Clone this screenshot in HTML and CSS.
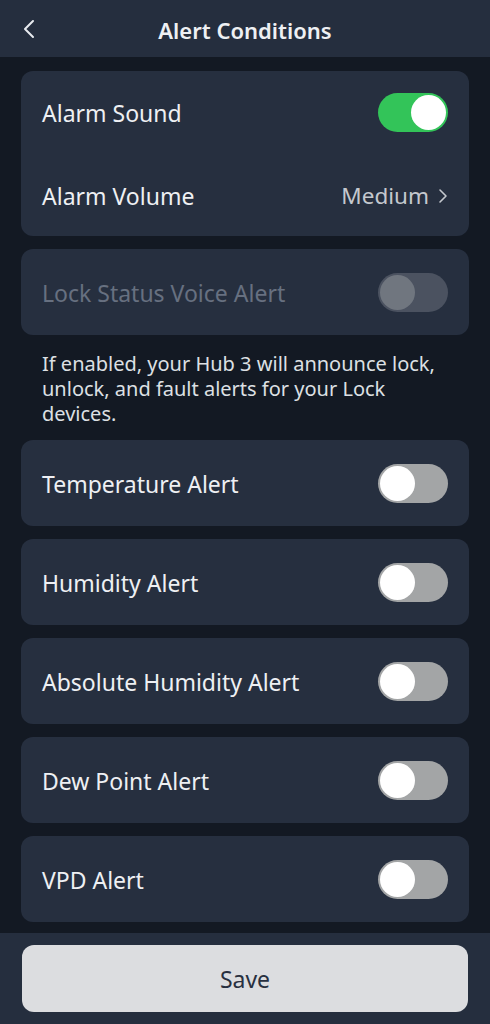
FILE: index.html
```html
<!DOCTYPE html>
<html lang="en">
<head>
<meta charset="utf-8">
<title>Alert Conditions</title>
<link rel="stylesheet" href="styles.css">
</head>
<body>
<div class="page">
  <header class="topbar">
    <button class="back" aria-label="Back">
      <svg width="14" height="20" viewBox="0 0 14 20"><path d="M11 2 L3 10 L11 18" fill="none" stroke="#e8ebef" stroke-width="2" stroke-linecap="round" stroke-linejoin="round"/></svg>
    </button>
    <h1 class="title">Alert Conditions</h1>
  </header>

  <main class="content">
    <section class="card">
      <div class="row row-split">
        <span class="label">Alarm Sound</span>
        <span class="toggle on"><span class="knob"></span></span>
      </div>
      <div class="row row-split">
        <span class="label">Alarm Volume</span>
        <span class="value">Medium
          <svg class="chev" width="10" height="16" viewBox="0 0 10 16"><path d="M2 2 L8 8 L2 14" fill="none" stroke="#c4c8ce" stroke-width="1.6" stroke-linecap="round" stroke-linejoin="round"/></svg>
        </span>
      </div>
    </section>

    <section class="card">
      <div class="row">
        <span class="label disabled">Lock Status Voice Alert</span>
        <span class="toggle dis"><span class="knob"></span></span>
      </div>
    </section>

    <p class="desc">If enabled, your Hub 3 will announce lock,<br>unlock, and fault alerts for your Lock<br>devices.</p>

    <section class="card">
      <div class="row">
        <span class="label">Temperature Alert</span>
        <span class="toggle off"><span class="knob"></span></span>
      </div>
    </section>
    <section class="card">
      <div class="row">
        <span class="label">Humidity Alert</span>
        <span class="toggle off"><span class="knob"></span></span>
      </div>
    </section>
    <section class="card">
      <div class="row">
        <span class="label">Absolute Humidity Alert</span>
        <span class="toggle off"><span class="knob"></span></span>
      </div>
    </section>
    <section class="card">
      <div class="row">
        <span class="label">Dew Point Alert</span>
        <span class="toggle off"><span class="knob"></span></span>
      </div>
    </section>
    <section class="card">
      <div class="row">
        <span class="label">VPD Alert</span>
        <span class="toggle off"><span class="knob"></span></span>
      </div>
    </section>
  </main>

  <footer class="footer">
    <button class="save">Save</button>
  </footer>
</div>
</body>
</html>
```

FILE: styles.css
```css
* { box-sizing: border-box; }

html, body {
  margin: 0;
  padding: 0;
  background: #131923;
}

body {
  font-family: "Noto Sans", "Open Sans", sans-serif;
  color: #eef0f3;
}

.page {
  width: 490px;
  height: 1024px;
  display: flex;
  flex-direction: column;
  overflow: hidden;
}

.topbar {
  height: 57px;
  flex: none;
  background: #252e3e;
  display: flex;
  align-items: center;
  justify-content: center;
  position: relative;
}

.back {
  position: absolute;
  left: 22px;
  top: 19px;
  background: none;
  border: 0;
  padding: 0;
  width: 14px;
  height: 20px;
  display: flex;
}

.title {
  margin: 0;
  padding-top: 2px;
  font-size: 22px;
  font-weight: 600;
  color: #eef0f3;
}

.content {
  flex: 1;
  display: flex;
  flex-direction: column;
  gap: 13px;
  padding: 14px 21px 0;
}

.card {
  background: #262f3f;
  border-radius: 12px;
  display: flex;
  flex-direction: column;
}

.row {
  height: 86px;
  padding: 0 21px;
  display: flex;
  align-items: center;
  justify-content: space-between;
}

.row-split {
  height: 82.5px;
}

.label {
  font-size: 23px;
  color: #eef0f3;
  padding-top: 2px;
}

.label.disabled {
  color: #677080;
}

.value {
  font-size: 22.5px;
  color: #c4c8ce;
  display: flex;
  align-items: center;
  gap: 9px;
  padding-top: 2px;
}

.chev { margin-top: 1px; }

.toggle {
  width: 70px;
  height: 39px;
  border-radius: 20px;
  display: flex;
  align-items: center;
  padding: 0 2px;
  flex: none;
}

.knob {
  width: 35px;
  height: 35px;
  border-radius: 50%;
  background: #ffffff;
}

.toggle.on {
  background: #33c459;
  justify-content: flex-end;
}

.toggle.off {
  background: #a3a5a6;
}

.toggle.dis {
  background: #4b5260;
}

.toggle.dis .knob {
  background: #70767f;
}

.desc {
  margin: 0;
  padding: 3px 21px 1px;
  font-size: 20px;
  line-height: 25px;
  color: #dde0e4;
}

.footer {
  flex: none;
  height: 91px;
  margin-top: 11px;
  background: #252e3e;
  padding: 12px 22px;
}

.save {
  width: 100%;
  height: 67px;
  border: 0;
  border-radius: 12px;
  background: #dcdde0;
  color: #283040;
  font-family: "Noto Sans", "Open Sans", sans-serif;
  font-size: 23px;
}
```
